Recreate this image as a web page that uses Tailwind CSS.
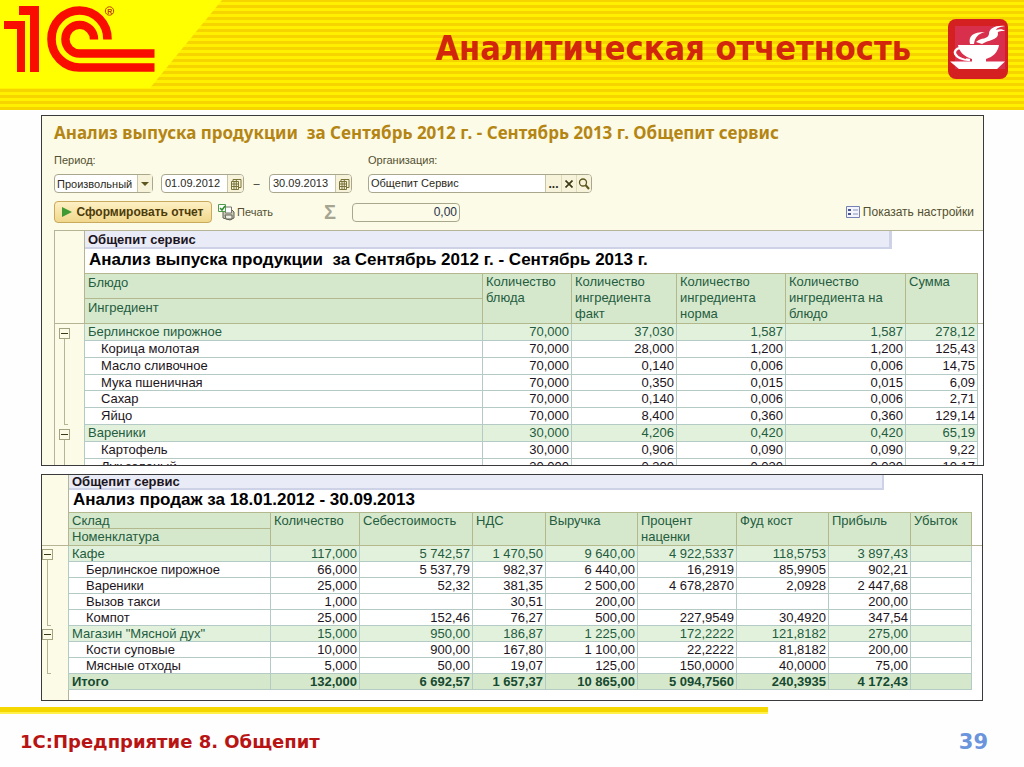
<!DOCTYPE html>
<html lang="ru">
<head>
<meta charset="utf-8">
<meta name="viewport" content="width=device-width, initial-scale=1">
<title>Аналитическая отчетность</title>
<script src="https://cdn.jsdelivr.net/npm/@tailwindcss/browser@4"></script>
</head>
<body class="min-h-screen bg-[#fefefe] font-['Liberation_Sans',Arial,sans-serif] text-[#1c1420]">

<header class="flex h-[110px] items-start justify-between bg-[repeating-linear-gradient(0deg,#f6d400_0px,#f6d400_3px,#fff000_3px,#fff000_6px)]">
  <svg class="h-[88px] w-[222px] shrink-0" viewBox="0 0 222 88" role="img" aria-label="1С">
    <path d="M0 0H222L150 88H0Z" fill="#ffff00"/>
    <path d="M4 21H25V72H17V29H4ZM19 6H39V72H30V15H19Z" fill="#f80d00"/>
    <path d="M107.500 39.500A28 28.500 0 1 0 80 67.500H154.500" fill="none" stroke="#f80d00" stroke-width="8.600"/>
    <path d="M94 39.500A14.300 14.300 0 1 0 80 53.500H154.500" fill="none" stroke="#f80d00" stroke-width="8.400"/>
    <circle cx="109.500" cy="11" r="4.200" fill="none" stroke="#c04000" stroke-width="1"/>
    <text x="107.200" y="13.500" font-size="7" font-weight="700" fill="#c04000">R</text>
  </svg>
  <div class="flex items-start gap-[37px] pt-[19px] pr-4">
    <h1 class="pt-[9px] font-['DejaVu_Sans_Condensed','DejaVu_Sans',sans-serif] text-[34px] leading-10 font-bold whitespace-nowrap text-[#d2260c]">Аналитическая отчетность</h1>
    <svg class="size-[60px] shrink-0" viewBox="0 0 60 60" aria-hidden="true">
      <rect width="60" height="60" rx="8" fill="#d42020"/>
      <rect x="7" y="7" width="50" height="43" fill="#d8304c"/>
      <g fill="#fff">
        <path d="M10 26H51C50 33 45 38 38 40V42.500H57L49 50H11L2 42.500H24V40C17 38 11 33 10 26Z"/>
        <path d="M22 25C20 17 25 13 37 13C30 15 27 18 26 25Z"/>
        <path d="M28 23C33 18 40 21 41 15C41 9 48 6 57 7C51 8 49 9 48 11C51 10 55 10 57 12C52 12 49 12 50 15C50 21 40 21 34 25Z"/>
      </g>
      <path d="M12 29C4 30 4 40 22 41" fill="none" stroke="#fff" stroke-width="2.500"/>
      <path d="M11 31C10 34 13 38 18 39" fill="none" stroke="#d8304c" stroke-width="2"/>
    </svg>
  </div>
</header>

<main class="mt-[5px] mr-10 ml-[41px] flex flex-col gap-2">

  <section class="h-[351px] overflow-hidden border border-[#3a3a3c] bg-[#fbfbe8]">
    <div class="flex h-[114px] flex-col px-3 pr-2">
      <h2 class="mt-[5px] font-['Noto_Sans','Open_Sans',sans-serif] text-[17px] leading-6 font-bold whitespace-pre text-[#b58513]">Анализ выпуска продукции  за Сентябрь 2012 г. - Сентябрь 2013 г. Общепит сервис</h2>
      <form class="mt-2 flex items-end text-[11px] text-[#2c2a20]">
        <div class="w-[107px]">
          <label for="period" class="block h-[21px] leading-[14px] text-[#54502f]">Период:</label>
          <div class="relative h-[19px] w-[99px]">
            <select id="period" class="h-full w-full appearance-none rounded-sm border border-[#aaa88c] bg-white pl-[2px] text-[11px] leading-4 text-[#2c2a20]"><option>Произвольный</option></select>
            <span class="pointer-events-none absolute inset-y-px right-px flex w-[15px] items-center justify-center border-l border-[#c9c6a4] bg-[#f6f3da]"><svg class="h-1 w-2" viewBox="0 0 8 4"><path d="M0 0H8L4 4Z" fill="#5d5620"/></svg></span>
          </div>
        </div>
        <div class="flex h-[19px] w-[83px] overflow-hidden rounded-sm border border-[#aaa88c] bg-white">
          <input aria-label="Начало периода" value="01.09.2012" class="w-0 grow pl-[3px]">
          <button type="button" aria-label="Календарь" class="flex w-4 items-center justify-center border-l border-[#c9c6a4] bg-[#f6f3da]"><svg class="size-3" viewBox="0 0 12 12" fill="none" stroke="#7a7338"><path d="M1.500 3.500H8.500V11.500H1.500ZM3 3V1.500H11V9.500H9M1.500 6H8.500M1.500 8.500H8.500M4 3.500V11.500M6.300 1.500V11.500"/></svg></button>
        </div>
        <span class="w-[25px] text-center leading-[19px]">–</span>
        <div class="flex h-[19px] w-[83px] overflow-hidden rounded-sm border border-[#aaa88c] bg-white">
          <input aria-label="Конец периода" value="30.09.2013" class="w-0 grow pl-[3px]">
          <button type="button" aria-label="Календарь" class="flex w-4 items-center justify-center border-l border-[#c9c6a4] bg-[#f6f3da]"><svg class="size-3" viewBox="0 0 12 12" fill="none" stroke="#7a7338"><path d="M1.500 3.500H8.500V11.500H1.500ZM3 3V1.500H11V9.500H9M1.500 6H8.500M1.500 8.500H8.500M4 3.500V11.500M6.300 1.500V11.500"/></svg></button>
        </div>
        <div class="ml-4">
          <label for="org" class="block h-[21px] leading-[14px] text-[#54502f]">Организация:</label>
          <div class="flex h-[19px] w-[224px] overflow-hidden rounded-sm border border-[#aaa88c] bg-white">
            <input id="org" value="Общепит Сервис" class="w-0 grow pl-[2px]">
            <button type="button" aria-label="Выбрать" class="w-4 border-l border-[#c9c6a4] bg-[#f6f3da] text-[12px] leading-3 font-bold">...</button>
            <button type="button" aria-label="Очистить" class="flex w-[15px] items-center justify-center border-l border-[#dedbbd] bg-[#f6f3da]"><svg class="size-2" viewBox="0 0 8 8"><path d="M0.500 0.500L7.500 7.500M7.500 0.500L0.500 7.500" stroke="#3c3a14" stroke-width="1.700"/></svg></button>
            <button type="button" aria-label="Открыть" class="flex w-[15px] items-center justify-center border-l border-[#dedbbd] bg-[#f6f3da]"><svg class="size-3" viewBox="0 0 12 12" fill="none" stroke="#5d5620"><circle cx="5" cy="4.500" r="3.500" stroke-width="1.300"/><path d="M7.500 7L11 11" stroke-width="2"/></svg></button>
          </div>
        </div>
      </form>
      <div class="mt-2 flex h-[22px] items-center text-[12px] text-[#54502f]">
        <button type="button" class="flex h-[22px] w-[158px] items-center justify-center gap-1 rounded-sm border border-[#c9a95c] bg-linear-to-b from-[#fdf0c4] to-[#f0d78c] text-[12px] font-bold whitespace-nowrap text-[#4d3b08]"><svg class="h-[10px] w-[10px] shrink-0" viewBox="0 0 10 10"><path d="M0 0L10 5L0 10Z" fill="#3f9a33"/></svg>Сформировать отчет</button>
        <button type="button" class="ml-[6px] flex w-[98px] items-center gap-[2px] text-[11px]"><svg class="size-[17px] shrink-0" viewBox="0 0 17 17"><path d="M5 8L7 5H13L16 8V14L12 16L5 14Z" fill="#c9c9b4" stroke="#5f5f55"/><path d="M7.500 3H13.500V9H7.500Z" fill="#fff" stroke="#77776a"/><path d="M7 11H14V15H8Z" fill="#efefe4" stroke="#5f5f55"/><path d="M0.500 0.500H7.500V7.500H0.500Z" fill="#fff" stroke="#4f9a4c"/><path d="M2 4L4 6L7 2" fill="none" stroke="#2c8a2a" stroke-width="1.500"/></svg>Печать</button>
        <span class="ml-2 w-7 text-[20px] font-bold text-[#a5a592]">Σ</span>
        <input aria-label="Сумма" value="0,00" class="h-[19px] w-[108px] rounded-sm border border-[#aaa88c] bg-transparent pr-[2px] text-right text-[#27304a]">
        <button type="button" class="mr-px ml-auto flex items-center gap-[3px]"><svg class="h-3 w-[14px]" viewBox="0 0 14 12"><path d="M0.500 0.500H13.500V11.500H0.500Z" fill="#f3f4fc" stroke="#7481b4"/><path d="M2 3H5V5H2ZM2 7H5V9H2Z" fill="#4a5488"/><path d="M7 4H12M7 8H12" stroke="#8a93bb"/></svg>Показать настройки</button>
      </div>
    </div>

    <div class="ml-3 border-t border-l border-[#b5b596] bg-white">
      <div class="flex">
        <div class="w-[30px] shrink-0 border-r border-[#b5b596] bg-[#fbfbe8]"></div>
        <div class="grow">
          <p class="mr-[91px] h-[18px] border-r-3 border-b-2 border-[#cdd2e6] bg-[#e9ecf7] pl-[3px] text-[13px] leading-[17px] font-bold">Общепит сервис</p>
          <h3 class="h-6 pl-1 text-[17px] leading-[21px] font-bold whitespace-pre text-black">Анализ выпуска продукции  за Сентябрь 2012 г. - Сентябрь 2013 г.</h3>
        </div>
      </div>
      <table class="w-full table-fixed border-separate border-spacing-0 text-[13px] leading-4 [&_tbody_td]:border-r [&_tbody_td]:border-b [&_tbody_td]:border-[#b3cbc4] [&_td]:p-0 [&_td]:pr-[2px] [&_td]:text-right [&_td]:whitespace-nowrap [&_tbody_th]:border-r [&_tbody_th]:border-b [&_tbody_th]:border-[#b3cbc4] [&_tbody_th]:p-0 [&_tbody_th]:text-left [&_tbody_th]:font-normal [&_tbody_th]:whitespace-nowrap">
        <colgroup><col class="w-[30px]"><col class="w-[398px]"><col class="w-[89px]"><col class="w-[105px]"><col class="w-[109px]"><col class="w-[120px]"><col class="w-[72px]"><col class="w-[5px]"></colgroup>
        <thead class="text-left align-top leading-[17px] text-[#245c40] [&_th]:border-r [&_th]:border-b [&_th]:border-[#b3b98c] [&_th]:pl-[3px] [&_th]:font-normal">
          <tr class="h-[26px]"><td rowspan="2" class="border-r border-b border-[#b5b596] bg-[#fbfbe8]"></td><th class="border-t bg-[#d6e8cc]">Блюдо</th><th rowspan="2" class="border-t bg-[#d6e8cc] leading-4">Количество блюда</th><th rowspan="2" class="border-t bg-[#d6e8cc] leading-4">Количество ингредиента факт</th><th rowspan="2" class="border-t bg-[#d6e8cc] leading-4">Количество ингредиента норма</th><th rowspan="2" class="border-t bg-[#d6e8cc] leading-4">Количество ингредиента на блюдо</th><th rowspan="2" class="border-t bg-[#d6e8cc] leading-4">Сумма</th><td rowspan="2" class="border-b border-[#b5b596]"></td></tr>
          <tr class="h-[25px]"><th class="bg-[#d6e8cc]">Ингредиент</th></tr>
        </thead>
        <tbody>
          <tr class="h-[17px] bg-[#e2f1dc] text-[#245c40]"><td rowspan="6" class="h-px border-b-0! bg-[#fbfbe8] align-top"><div class="flex h-full flex-col pt-1 pl-1"><button type="button" aria-label="Свернуть" class="flex size-[11px] shrink-0 items-center justify-center border border-[#a3a37f] bg-[#fbfbe8]"><span class="h-px w-[7px] bg-[#3c3a14]"></span></button><span class="ml-[5px] w-1 grow border-b border-l border-[#b5b596]"></span></div></td><th><span class="pl-[3px]">Берлинское пирожное</span></th><td>70,000</td><td>37,030</td><td>1,587</td><td>1,587</td><td>278,12</td></tr>
          <tr class="h-[17px]"><th><span class="pl-4">Корица молотая</span></th><td>70,000</td><td>28,000</td><td>1,200</td><td>1,200</td><td>125,43</td></tr>
          <tr class="h-[17px]"><th><span class="pl-4">Масло сливочное</span></th><td>70,000</td><td>0,140</td><td>0,006</td><td>0,006</td><td>14,75</td></tr>
          <tr class="h-4 leading-[15px]"><th><span class="pl-4">Мука пшеничная</span></th><td>70,000</td><td>0,350</td><td>0,015</td><td>0,015</td><td>6,09</td></tr>
          <tr class="h-[17px]"><th><span class="pl-4">Сахар</span></th><td>70,000</td><td>0,140</td><td>0,006</td><td>0,006</td><td>2,71</td></tr>
          <tr class="h-[17px]"><th><span class="pl-4">Яйцо</span></th><td>70,000</td><td>8,400</td><td>0,360</td><td>0,360</td><td>129,14</td></tr>
        </tbody>
        <tbody>
          <tr class="h-[17px] bg-[#e2f1dc] text-[#245c40]"><td rowspan="3" class="h-px border-b-0! bg-[#fbfbe8] align-top"><div class="flex h-full flex-col pt-1 pl-1"><button type="button" aria-label="Свернуть" class="flex size-[11px] shrink-0 items-center justify-center border border-[#a3a37f] bg-[#fbfbe8]"><span class="h-px w-[7px] bg-[#3c3a14]"></span></button><span class="ml-[5px] w-1 grow border-l border-[#b5b596]"></span></div></td><th><span class="pl-[3px]">Вареники</span></th><td>30,000</td><td>4,206</td><td>0,420</td><td>0,420</td><td>65,19</td></tr>
          <tr class="h-[17px]"><th><span class="pl-4">Картофель</span></th><td>30,000</td><td>0,906</td><td>0,090</td><td>0,090</td><td>9,22</td></tr>
          <tr class="h-[17px]"><th><span class="pl-4">Лук зеленый</span></th><td>30,000</td><td>0,300</td><td>0,030</td><td>0,030</td><td>10,17</td></tr>
        </tbody>
      </table>
    </div>
  </section>

  <section class="mr-px border border-[#3a3a3c] bg-[linear-gradient(90deg,#fbfbe8_26px,#b5b596_26px,#b5b596_27px,#fff_27px)] pb-[10px]">
    <div class="pl-[27px]">
      <p class="mr-[98px] h-[15px] border-r-2 border-b-2 border-[#cdd2e6] bg-[#e9ecf7] pl-[3px] text-[13px] leading-[13px] font-bold">Общепит сервис</p>
      <h3 class="h-[22px] pl-1 text-[17px] leading-5 font-bold text-black">Анализ продаж за 18.01.2012 - 30.09.2013</h3>
    </div>
    <table class="w-full table-fixed border-separate border-spacing-0 text-[13px] leading-[15px] [&_tbody_td]:border-r [&_tbody_td]:border-b [&_tbody_td]:border-[#b3cbc4] [&_td]:p-0 [&_td]:pr-[2px] [&_td]:text-right [&_td]:whitespace-nowrap [&_tbody_th]:border-r [&_tbody_th]:border-b [&_tbody_th]:border-[#b3cbc4] [&_tbody_th]:p-0 [&_tbody_th]:text-left [&_tbody_th]:whitespace-nowrap">
      <colgroup><col class="w-[27px]"><col class="w-[202px]"><col class="w-[89px]"><col class="w-[113px]"><col class="w-[73px]"><col class="w-[92px]"><col class="w-[99px]"><col class="w-[92px]"><col class="w-[82px]"><col class="w-[61px]"><col class="w-[10px]"></colgroup>
      <thead class="text-left align-top text-[#245c40] [&_th]:border-r [&_th]:border-b [&_th]:border-[#b3b98c] [&_th]:pl-[3px] [&_th]:font-normal">
        <tr class="h-[17px]"><td rowspan="2" class="border-r border-b border-[#b5b596]"></td><th class="border-t bg-[#d6e8cc]">Склад</th><th rowspan="2" class="border-t bg-[#d6e8cc]">Количество</th><th rowspan="2" class="border-t bg-[#d6e8cc]">Себестоимость</th><th rowspan="2" class="border-t bg-[#d6e8cc]">НДС</th><th rowspan="2" class="border-t bg-[#d6e8cc]">Выручка</th><th rowspan="2" class="border-t bg-[#d6e8cc] leading-4">Процент наценки</th><th rowspan="2" class="border-t bg-[#d6e8cc]">Фуд кост</th><th rowspan="2" class="border-t bg-[#d6e8cc]">Прибыль</th><th rowspan="2" class="border-t bg-[#d6e8cc]">Убыток</th><td rowspan="2" class="border-b border-[#b5b596]"></td></tr>
        <tr class="h-[17px]"><th class="bg-[#d6e8cc]">Номенклатура</th></tr>
      </thead>
      <tbody class="[&_th]:font-normal">
        <tr class="h-4 bg-[#e2f1dc] text-[#245c40]"><td rowspan="5" class="h-px border-b-0! bg-[#fbfbe8] align-top"><div class="flex h-full flex-col pt-[3px]"><button type="button" aria-label="Свернуть" class="flex size-[11px] shrink-0 items-center justify-center border border-[#a3a37f] bg-[#fbfbe8]"><span class="h-px w-[7px] bg-[#3c3a14]"></span></button><span class="ml-[5px] w-1 grow border-b border-l border-[#b5b596]"></span></div></td><th><span class="pl-[3px]">Кафе</span></th><td>117,000</td><td>5 742,57</td><td>1 470,50</td><td>9 640,00</td><td>4 922,5337</td><td>118,5753</td><td>3 897,43</td><td></td></tr>
        <tr class="h-4"><th><span class="pl-[17px]">Берлинское пирожное</span></th><td>66,000</td><td>5 537,79</td><td>982,37</td><td>6 440,00</td><td>16,2919</td><td>85,9905</td><td>902,21</td><td></td></tr>
        <tr class="h-4"><th><span class="pl-[17px]">Вареники</span></th><td>25,000</td><td>52,32</td><td>381,35</td><td>2 500,00</td><td>4 678,2870</td><td>2,0928</td><td>2 447,68</td><td></td></tr>
        <tr class="h-4"><th><span class="pl-[17px]">Вызов такси</span></th><td>1,000</td><td></td><td>30,51</td><td>200,00</td><td></td><td></td><td>200,00</td><td></td></tr>
        <tr class="h-4"><th><span class="pl-[17px]">Компот</span></th><td>25,000</td><td>152,46</td><td>76,27</td><td>500,00</td><td>227,9549</td><td>30,4920</td><td>347,54</td><td></td></tr>
      </tbody>
      <tbody class="[&_th]:font-normal">
        <tr class="h-4 bg-[#e2f1dc] text-[#245c40]"><td rowspan="3" class="h-px border-b-0! bg-[#fbfbe8] align-top"><div class="flex h-full flex-col pt-[3px]"><button type="button" aria-label="Свернуть" class="flex size-[11px] shrink-0 items-center justify-center border border-[#a3a37f] bg-[#fbfbe8]"><span class="h-px w-[7px] bg-[#3c3a14]"></span></button><span class="ml-[5px] w-1 grow border-b border-l border-[#b5b596]"></span></div></td><th><span class="pl-[3px]">Магазин "Мясной дух"</span></th><td>15,000</td><td>950,00</td><td>186,87</td><td>1 225,00</td><td>172,2222</td><td>121,8182</td><td>275,00</td><td></td></tr>
        <tr class="h-4"><th><span class="pl-[17px]">Кости суповые</span></th><td>10,000</td><td>900,00</td><td>167,80</td><td>1 100,00</td><td>22,2222</td><td>81,8182</td><td>200,00</td><td></td></tr>
        <tr class="h-4"><th><span class="pl-[17px]">Мясные отходы</span></th><td>5,000</td><td>50,00</td><td>19,07</td><td>125,00</td><td>150,0000</td><td>40,0000</td><td>75,00</td><td></td></tr>
      </tbody>
      <tbody>
        <tr class="h-4 bg-[#d6e8cc] font-bold text-[#174a30]"><td class="border-b-0! bg-[#fbfbe8]"></td><th><span class="pl-[3px]">Итого</span></th><td>132,000</td><td>6 692,57</td><td>1 657,37</td><td>10 865,00</td><td>5 094,7560</td><td>240,3935</td><td>4 172,43</td><td></td></tr>
      </tbody>
    </table>
  </section>
</main>

<div class="mt-[6px] h-[7px] w-3/4 border-b-2 border-[#fff04a] bg-[#f5d800]"></div>
<footer class="mt-4 flex items-center justify-between pr-9 pl-5 font-['DejaVu_Sans',sans-serif] leading-6 font-bold">
  <p class="text-[18px] text-[#b81414]">1С:Предприятие 8. Общепит</p>
  <p class="text-[21px] text-[#6a94dc]">39</p>
</footer>
</body>
</html>
